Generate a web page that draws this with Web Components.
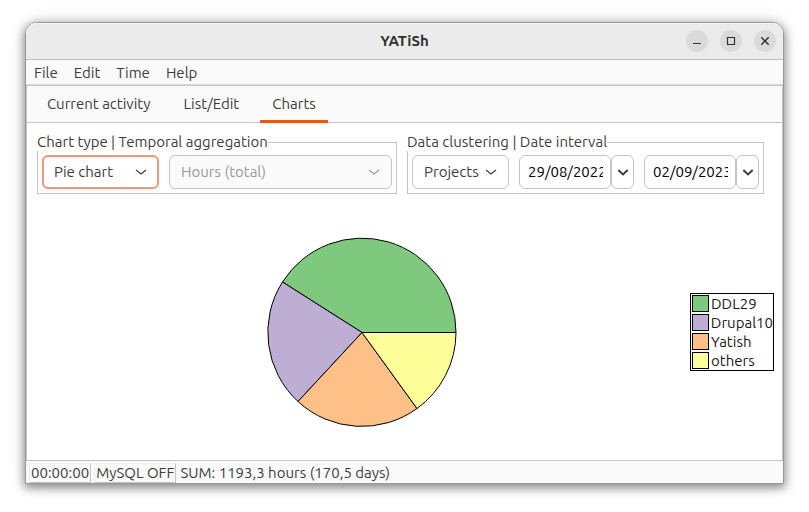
<!DOCTYPE html>
<html lang="en">
<head>
<meta charset="utf-8">
<title>YATiSh</title>
<style>
  body {
    margin: 0;
    background: #fff;
    color: #3d3d3d;
    font: 15px/18px Ubuntu, "Noto Sans", sans-serif;
  }
</style>
</head>
<body>
<app-window></app-window>

<script>
const define = (name, html, setup) => {
  const template = document.createElement('template');
  template.innerHTML = html;
  customElements.define(name, class extends HTMLElement {
    constructor() {
      super();
      this.attachShadow({ mode: 'open' }).append(template.content.cloneNode(true));
    }
    connectedCallback() {
      if (setup) setup(this, this.shadowRoot);
    }
  });
};

/* Title bar with the three window buttons */
define('title-bar', `
  <style>
    :host { display: grid; grid-template-columns: 1fr auto 1fr; align-items: center; height: 36px; background: #ebebeb; border-bottom: 1px solid #bfbfbf; box-shadow: inset 0 1px #f8f8f8; border-radius: 11px 11px 0 0; }
    h1 { grid-column: 2; margin: 0; font-size: 15px; line-height: 18px; font-weight: 700; color: #303030; }
    div { display: flex; justify-content: flex-end; gap: 12px; padding-right: 7px; }
    button { display: grid; place-items: center; width: 22px; height: 22px; padding: 0; border: 0; border-radius: 50%; background: #dadada; color: #303030; }
    svg { width: 10px; height: 10px; fill: none; stroke: currentColor; }
  </style>
  <h1><slot></slot></h1>
  <div>
    <button aria-label="Minimize"><svg viewBox="0 0 10 10"><path d="M1 7.5H9"/></svg></button>
    <button aria-label="Maximize"><svg viewBox="0 0 10 10"><path d="M1.500 1.500H8.500V8.500H1.500Z" stroke-width="1.200"/></svg></button>
    <button aria-label="Close"><svg viewBox="0 0 10 10"><path d="M1.300 1.300L8.700 8.700M8.700 1.300L1.300 8.700" stroke-width="1.500"/></svg></button>
  </div>`);

define('menu-bar', `
  <style>
    :host { display: flex; gap: 16px; align-items: center; height: 25px; padding: 1px 8px 0; background: #fafafa; border-bottom: 1px solid #dcdcdc; box-sizing: border-box; }
    ::slotted(button) { font: inherit; color: inherit; background: none; border: 0; padding: 0; }
  </style>
  <slot></slot>`);

define('tab-item', `
  <style>
    :host { display: flex; }
    button { font: inherit; color: inherit; background: none; border: 0; border-bottom: 3px solid transparent; padding: 2px 12px 0; }
    :host([selected]) button { border-bottom-color: #e95420; }
  </style>
  <button role="tab"><slot></slot></button>`,
  (el, root) => root.querySelector('button').setAttribute('aria-selected', el.hasAttribute('selected')));

define('tab-bar', `
  <style>
    :host { display: flex; gap: 9px; height: 36px; padding-left: 8px; background: #fafafa; border-bottom: 1px solid #c4c4c4; }
    ::slotted(*) { margin-bottom: -1px; }
  </style>
  <slot></slot>`);

define('group-box', `
  <style>
    :host { display: block; }
    fieldset { margin: 0; min-width: 0; padding: 4px 4px; border: 1px solid #c4c4c4; }
    legend { margin-left: -5px; padding: 0; background: #fff; line-height: 18px; }
    div { display: flex; gap: 10px; }
  </style>
  <fieldset><legend></legend><div><slot></slot></div></fieldset>`,
  (el, root) => { root.querySelector('legend').textContent = el.getAttribute('label'); });

define('combo-box', `
  <style>
    :host { display: grid; height: 34px; }
    select, svg { grid-area: 1 / 1; }
    select { appearance: none; width: 100%; margin: 0; padding: 0 11px; border: 1px solid #c4c4c4; border-radius: 6px; background: #fff; font: inherit; color: inherit; opacity: 1; }
    :host([active]) select { border: 2px solid #eb987b; padding: 0 10px; outline: 0; }
    select:disabled { background: #fafafa; color: #999; }
    svg { place-self: center end; margin-right: 12px; width: 12px; height: 12px; fill: none; stroke: #3d3d3d; pointer-events: none; }
    select:disabled + svg { stroke: #999; }
  </style>
  <select></select>
  <svg viewBox="0 0 12 12"><path d="M1 4L6 8L11 4" stroke-width="1.200"/></svg>`,
  (el, root) => {
    const select = root.querySelector('select');
    select.setAttribute('aria-label', el.getAttribute('label'));
    select.disabled = el.hasAttribute('disabled');
    select.replaceChildren(new Option(el.getAttribute('value')));
  });

define('date-picker', `
  <style>
    :host { display: flex; height: 34px; }
    input, button { box-sizing: border-box; border: 1px solid #c4c4c4; border-radius: 6px; background: #fff; margin: 0; }
    input { width: 92px; padding: 0 7px 0 8px; font: inherit; color: #000; }
    button { display: grid; place-items: center; width: 23px; padding: 0; color: #3d3d3d; }
    svg { width: 12px; height: 12px; fill: none; stroke: currentColor; }
  </style>
  <input type="text">
  <button aria-label="Open calendar"><svg viewBox="0 0 12 12"><path d="M1.300 4L6 8.400L10.700 4" stroke-width="2"/></svg></button>`,
  (el, root) => {
    const input = root.querySelector('input');
    input.value = el.getAttribute('value');
    input.setAttribute('aria-label', el.getAttribute('label'));
  });

define('pie-chart', `
  <style>
    :host { display: block; width: 190px; height: 190px; }
    svg { display: block; width: 100%; height: 100%; }
    path { stroke: #000; stroke-linejoin: round; }
  </style>
  <svg viewBox="0 0 190 190" role="img" aria-label="Hours by project">
    <path fill="#7fc97f" d="M95 95.500H189A94 94 0 0 0 15.500 45Z"/>
    <path fill="#beaed4" d="M95 95.500L15.500 45A94 94 0 0 0 31 164.500Z"/>
    <path fill="#fdc086" d="M95 95.500L31 164.500A94 94 0 0 0 150 171.500Z"/>
    <path fill="#ffff99" d="M95 95.500L150 171.500A94 94 0 0 0 189 95.500Z"/>
  </svg>`);

define('legend-item', `
  <style>
    :host { display: flex; align-items: center; gap: 2px; height: 19px; color: #1a1a1a; }
    i { width: 15px; height: 15px; border: 1px solid #000; background: var(--swatch); }
  </style>
  <i></i><span><slot></slot></span>`);

define('chart-legend', `
  <style>
    :host { display: block; box-sizing: border-box; width: 84px; padding: 0 0 0 1px; border: 1px solid #000; background: #fff; }
  </style>
  <slot></slot>`);

define('status-bar', `
  <style>
    :host { display: flex; align-items: center; gap: 3px; padding: 2px 3px 0; background: #fafafa; border-top: 1px solid #c4c4c4; }
    ::slotted(span) { padding: 0 1px; border: solid #f0f0f0; border-width: 1px; border-right-color: #c4c4c4; border-bottom-color: #c4c4c4; }
    ::slotted(output) { padding-left: 1px; }
  </style>
  <slot></slot>`);

define('app-window', `
  <style>
    :host { display: flex; box-sizing: border-box; min-height: 100vh; padding: 22px 25px 28px; }
    .frame { flex: 1; display: flex; flex-direction: column; border: 1px solid #999; border-radius: 12px 12px 0 0; background: #fafafa; box-shadow: 0 3px 10px 1px rgba(0,0,0,.42), 0 0 18px rgba(0,0,0,.12); }
    main { flex: 1; display: flex; flex-direction: column; background: #fff; border: solid #c4c4c4; border-width: 1px 1px 0; }
    .filters { display: flex; flex-wrap: wrap; gap: 10px; padding: 10px 10px 0; }
    .type { flex: 0 0 360px; }
    .data { flex: 0 0 357px; }
    .kind { flex: 0 0 117px; }
    .unit { flex: 1; }
    .cluster { flex: 1; }
    .canvas { flex: 1; display: flex; align-items: center; padding: 10px 8px 0 6px; }
    .plot { flex: 1; display: flex; justify-content: center; }
  </style>
  <div class="frame">
    <title-bar>YATiSh</title-bar>
    <menu-bar><button>File</button><button>Edit</button><button>Time</button><button>Help</button></menu-bar>
    <main>
      <tab-bar role="tablist">
        <tab-item>Current activity</tab-item>
        <tab-item>List/Edit</tab-item>
        <tab-item selected>Charts</tab-item>
      </tab-bar>
      <div class="filters">
        <group-box class="type" label="Chart type | Temporal aggregation">
          <combo-box class="kind" active label="Chart type" value="Pie chart"></combo-box>
          <combo-box class="unit" disabled label="Temporal aggregation" value="Hours (total)"></combo-box>
        </group-box>
        <group-box class="data" label="Data clustering | Date interval">
          <combo-box class="cluster" label="Data clustering" value="Projects"></combo-box>
          <date-picker label="Start date" value="29/08/2022"></date-picker>
          <date-picker label="End date" value="02/09/2023"></date-picker>
        </group-box>
      </div>
      <div class="canvas">
        <div class="plot"><pie-chart></pie-chart></div>
        <chart-legend>
          <legend-item style="--swatch:#7fc97f">DDL29</legend-item>
          <legend-item style="--swatch:#beaed4">Drupal10</legend-item>
          <legend-item style="--swatch:#fdc086">Yatish</legend-item>
          <legend-item style="--swatch:#ffff99">others</legend-item>
        </chart-legend>
      </div>
    </main>
    <status-bar><span>00:00:00</span><span>MySQL OFF</span><output>SUM: 1193,3 hours (170,5 days)</output></status-bar>
  </div>`);
</script>
</body>
</html>
